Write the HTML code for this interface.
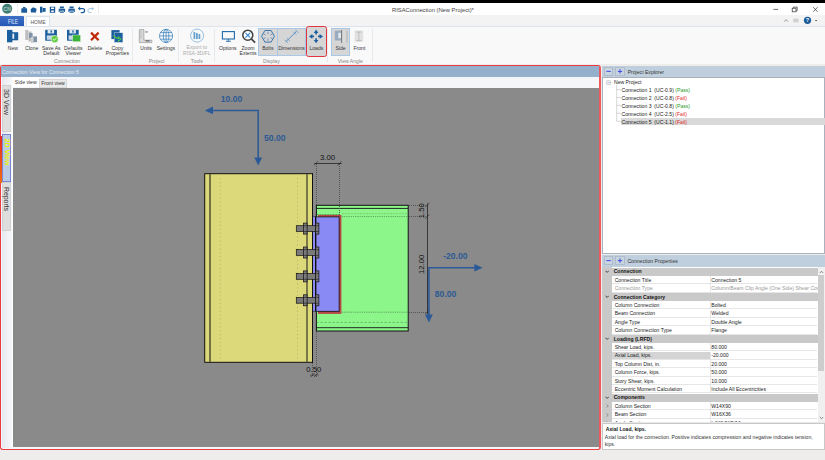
<!DOCTYPE html>
<html><head><meta charset="utf-8">
<style>
*{margin:0;padding:0;box-sizing:border-box}
html,body{width:825px;height:460px;overflow:hidden;background:#efedec;font-family:"Liberation Sans",sans-serif;color:#333}
.a{position:absolute}
.t{position:absolute;white-space:nowrap;font-size:5.1px;line-height:6px}
.c{transform:translateX(-50%)}
#ov{position:absolute;left:0;top:0;width:825px;height:460px}
</style></head><body>
<!-- top black band -->
<div class="a" style="left:0;top:0;width:825px;height:3px;background:#000"></div>
<!-- title bar -->
<div class="a" style="left:0;top:3px;width:825px;height:12px;background:#fff"></div>
<div class="t" style="left:392px;top:6.5px;font-size:5.8px;color:#444">RISAConnection (New Project)*</div>
<!-- tab row -->
<div class="a" style="left:0;top:15px;width:825px;height:11px;background:#f3f3f3"></div>
<div class="a" style="left:0;top:16px;width:24px;height:10.2px;background:linear-gradient(#3f70c8,#2558b4);border-top-right-radius:1px"></div>
<div class="t" style="left:12.5px;top:20.6px;transform:translate(-50%,-50%) scaleX(0.72);color:#e2ecfa;font-size:6.6px;line-height:7px">FILE</div>
<div class="a" style="left:25.5px;top:16px;width:24.5px;height:11px;background:#fff;border:1px solid #dde3ea;border-bottom:none"></div>
<div class="t" style="left:37.5px;top:21.5px;transform:translate(-50%,-50%) scaleX(0.84);color:#555;font-size:6px;line-height:7px">HOME</div>
<!-- ribbon -->
<div class="a" style="left:0;top:26px;width:825px;height:1px;background:#dce3ec"></div>
<div class="a" style="left:0;top:27px;width:825px;height:37px;background:#f9f9f9"></div>

<!-- ribbon separators -->
<div class="a" style="left:132.2px;top:29px;width:0.8px;height:33px;background:#e6eaee"></div>
<div class="a" style="left:178px;top:29px;width:0.8px;height:33px;background:#e6eaee"></div>
<div class="a" style="left:213.7px;top:29px;width:0.8px;height:33px;background:#e6eaee"></div>
<div class="a" style="left:326.9px;top:29px;width:0.8px;height:33px;background:#e6eaee"></div>
<div class="a" style="left:371.5px;top:29px;width:0.8px;height:33px;background:#e6eaee"></div>
<!-- toggle buttons bg -->
<div class="a" style="left:258.2px;top:28.2px;width:47.5px;height:28.3px;background:#d6d6d6;border:0.8px solid #a9c8e6"></div>
<div class="a" style="left:277.2px;top:28.2px;width:0.8px;height:28.3px;background:#a9c8e6"></div>
<div class="a" style="left:305.9px;top:26.2px;width:21px;height:31.1px;background:#d6d6d6;border:1.3px solid #e2343c;border-radius:2.5px"></div>
<div class="a" style="left:331px;top:28.2px;width:18.9px;height:28.3px;background:#d6d6d6;border:0.8px solid #a9c8e6"></div>
<!-- ribbon labels -->
<div class="t c" style="left:12.9px;top:45px;color:#333">New</div>
<div class="t c" style="left:31.7px;top:45px;color:#333">Clone</div>
<div class="t c" style="left:51.3px;top:45px;color:#333;line-height:5.5px;text-align:center;top:45.5px">Save As<br>Default</div>
<div class="t c" style="left:73.3px;top:45px;color:#333;line-height:5.5px;text-align:center;top:45.5px">Defaults<br>Viewer</div>
<div class="t c" style="left:95px;top:45px;color:#333">Delete</div>
<div class="t c" style="left:117.4px;top:45px;color:#333;line-height:5.5px;text-align:center;top:45.5px">Copy<br>Properties</div>
<div class="t c" style="left:146.1px;top:45px;color:#333">Units</div>
<div class="t c" style="left:165.9px;top:45px;color:#333">Settings</div>
<div class="t c" style="left:196.8px;top:45px;color:#aaa;line-height:5.5px;text-align:center">Export to<br>RISA-3D/FL</div>
<div class="t c" style="left:227.8px;top:45px;color:#333">Options</div>
<div class="t c" style="left:248px;top:45px;color:#333;line-height:5.5px;text-align:center;top:45.5px">Zoom<br>Extents</div>
<div class="t c" style="left:267.8px;top:45px;color:#333">Bolts</div>
<div class="t c" style="left:291.5px;top:45px;color:#333">Dimensions</div>
<div class="t c" style="left:316.4px;top:45px;color:#333">Loads</div>
<div class="t c" style="left:340.5px;top:45px;color:#333">Side</div>
<div class="t c" style="left:359.4px;top:45px;color:#333">Front</div>
<div class="t c" style="left:67px;top:58px;color:#868686">Connection</div>
<div class="t c" style="left:156.6px;top:58px;color:#868686">Project</div>
<div class="t c" style="left:196.8px;top:58px;color:#868686">Tools</div>
<div class="t c" style="left:271.4px;top:58px;color:#868686">Display</div>
<div class="t c" style="left:350.3px;top:58px;color:#868686">View Angle</div>
<!-- left panel -->
<div class="a" style="left:0;top:65px;width:601px;height:385.2px;border:1.6px solid #ec3c42;border-width:1.3px 2px 1.7px 1.5px;border-right-color:#f0585c;border-radius:3px;background:#f4f6fa"></div>
<div class="a" style="left:1.3px;top:66.3px;width:598px;height:10.7px;background:#94b0cc"></div>
<div class="t" style="left:2px;top:69px;color:#e4ecf4">Connection View for Connection 5</div>
<div class="a" style="left:12px;top:77.3px;width:27px;height:10px;background:#fff"></div>
<div class="t" style="left:14.8px;top:79px;color:#333">Side view</div>
<div class="a" style="left:39px;top:78.5px;width:27.7px;height:9px;background:#e8e8e8;border:0.5px solid #d8d8d8"></div>
<div class="t" style="left:41.2px;top:80px;color:#333">Front view</div>
<!-- left vertical tabs -->
<div class="a" style="left:1.5px;top:77.3px;width:10.3px;height:371px;background:linear-gradient(90deg,#e6e9ef,#f7f8fb)"></div><div class="a" style="left:11.8px;top:87.8px;width:1.2px;height:360px;background:#fff"></div>
<div class="a" style="left:1.5px;top:85.2px;width:9.2px;height:47px;background:#dedede;border:0.5px solid #d0d0d0"></div>
<div class="t" style="left:6.2px;top:101.9px;transform:translate(-50%,-50%) rotate(90deg);color:#333;font-size:7px;line-height:7px">3D View</div>
<div class="a" style="left:0;top:136px;width:1.6px;height:47px;background:linear-gradient(#e82a20,#f07010)"></div>
<div class="a" style="left:1.8px;top:133.6px;width:8.8px;height:48.4px;background:#b9cce4;border:0.7px solid #7a86d0"></div>
<div class="t" style="left:6.1px;top:152.2px;transform:translate(-50%,-50%) rotate(90deg);color:#f4f000;font-size:7.1px;font-weight:bold;line-height:7px">2D View</div>
<div class="a" style="left:1.5px;top:182.4px;width:9.2px;height:49px;background:#dedede;border:0.5px solid #d0d0d0"></div>
<div class="t" style="left:6px;top:199.2px;transform:translate(-50%,-50%) rotate(90deg);color:#333;font-size:6.9px;line-height:7px">Reports</div>
<!-- canvas -->
<div class="a" style="left:13px;top:87.8px;width:586px;height:359.6px;background:#8a8a8a"></div>

<!-- right panels -->
<div class="a" style="left:602px;top:66px;width:223px;height:11px;background:#c0cfdd"></div>
<div class="a" style="left:603.7px;top:67.1px;width:9.8px;height:8.6px;background:#c8d4e0;border:0.5px solid #b0bccc"></div>
<div class="a" style="left:615.1px;top:67.1px;width:9.8px;height:8.6px;background:#c8d4e0;border:0.5px solid #b0bccc"></div>
<div class="t" style="left:627.7px;top:68.5px;color:#333">Project Explorer</div>
<div class="a" style="left:602.3px;top:77px;width:222.7px;height:176.5px;background:#fff;border:0.7px solid #a9b1bd"></div>

<!-- tree -->
<div class="a" style="left:620.6px;top:117.7px;width:204px;height:7.4px;background:#d9d9d9"></div>
<svg class="a" style="left:0;top:0" width="825" height="460" viewBox="0 0 825 460">
<rect x="606.6" y="80.7" width="3.8" height="3.8" rx="0.6" fill="#fff" stroke="#9a9a9a" stroke-width="0.5"/>
<line x1="607.5" y1="82.6" x2="609.5" y2="82.6" stroke="#5060c0" stroke-width="0.5"/>
<line x1="610.4" y1="82.6" x2="613" y2="82.6" stroke="#999" stroke-width="0.4" stroke-dasharray="0.6,0.6"/>
<line x1="616.7" y1="85" x2="616.7" y2="121.3" stroke="#999" stroke-width="0.4"/>
<g stroke="#999" stroke-width="0.4">
<line x1="616.7" y1="89.6" x2="621" y2="89.6"/><line x1="616.7" y1="97.5" x2="621" y2="97.5"/>
<line x1="616.7" y1="105.4" x2="621" y2="105.4"/><line x1="616.7" y1="113.3" x2="621" y2="113.3"/>
<line x1="616.7" y1="121.3" x2="621" y2="121.3"/>
</g></svg>
<div class="t" style="left:614px;top:78.7px;color:#222">New Project</div>
<div class="t" style="left:621.5px;top:86.6px;color:#222">Connection 1&nbsp; (UC-0.9) <span style="color:#2a9a2a">(Pass)</span></div>
<div class="t" style="left:621.5px;top:94.5px;color:#222">Connection 2&nbsp; (UC-0.8) <span style="color:#e02828">(Fail)</span></div>
<div class="t" style="left:621.5px;top:102.5px;color:#222">Connection 3&nbsp; (UC-0.8) <span style="color:#2a9a2a">(Pass)</span></div>
<div class="t" style="left:621.5px;top:110.9px;color:#222">Connection 4&nbsp; (UC-2.5) <span style="color:#e02828">(Fail)</span></div>
<div class="t" style="left:621.5px;top:118.5px;color:#222">Connection 5&nbsp; (UC-1.1) <span style="color:#e02828">(Fail)</span></div>
<div class="a" style="left:602px;top:255px;width:223px;height:11.5px;background:#c0cfdd"></div>
<div class="a" style="left:603.7px;top:256.3px;width:9.8px;height:8.6px;background:#c8d4e0;border:0.5px solid #b0bccc"></div>
<div class="a" style="left:615.1px;top:256.3px;width:9.8px;height:8.6px;background:#c8d4e0;border:0.5px solid #b0bccc"></div>
<div class="t" style="left:627.4px;top:258px;color:#333">Connection Properties</div>

<div id="grid" class="a" style="left:602px;top:267px;width:223px;height:154.6px;background:#fff;overflow:hidden">
<div class="a" style="left:0;top:0;width:10px;height:160px;background:#c9c9c9"></div>
<div class="a" style="left:0;top:0.50px;width:215.5px;height:8.4px;background:#c9c9c9"></div>
<svg class="a" style="left:3px;top:2.90px" width="4.4" height="3.4" viewBox="0 0 4.4 3.4"><path d="M0.5,0.7 L2.2,2.4 L3.9,0.7" fill="none" stroke="#333" stroke-width="0.9"/></svg>
<div class="t" style="left:11.7px;top:1.40px;font-weight:bold;color:#111">Connection</div>
<div class="a" style="left:10px;top:8.90px;width:97.5px;height:8.4px;background:#fff;border-bottom:0.5px solid #e6e6e6"></div>
<div class="a" style="left:107.8px;top:8.90px;width:107.7px;height:8.4px;background:#fff;border-bottom:0.5px solid #e6e6e6;border-left:0.5px solid #e6e6e6"></div>
<div class="t" style="left:12.7px;top:9.80px;color:#222">Connection Title</div>
<div class="t" style="left:109.3px;top:9.80px;color:#222">Connection 5</div>
<div class="a" style="left:10px;top:17.30px;width:97.5px;height:8.4px;background:#fff;border-bottom:0.5px solid #e6e6e6"></div>
<div class="a" style="left:107.8px;top:17.30px;width:107.7px;height:8.4px;background:#fff;border-bottom:0.5px solid #e6e6e6;border-left:0.5px solid #e6e6e6"></div>
<div class="t" style="left:12.7px;top:18.20px;color:#999">Connection Type</div>
<div class="t" style="left:109.3px;top:18.20px;color:#999">Column/Beam Clip Angle (One Side) Shear Connection</div>
<div class="a" style="left:0;top:25.70px;width:215.5px;height:8.4px;background:#c9c9c9"></div>
<svg class="a" style="left:3px;top:28.10px" width="4.4" height="3.4" viewBox="0 0 4.4 3.4"><path d="M0.5,0.7 L2.2,2.4 L3.9,0.7" fill="none" stroke="#333" stroke-width="0.9"/></svg>
<div class="t" style="left:11.7px;top:26.60px;font-weight:bold;color:#111">Connection Category</div>
<div class="a" style="left:10px;top:34.10px;width:97.5px;height:8.4px;background:#fff;border-bottom:0.5px solid #e6e6e6"></div>
<div class="a" style="left:107.8px;top:34.10px;width:107.7px;height:8.4px;background:#fff;border-bottom:0.5px solid #e6e6e6;border-left:0.5px solid #e6e6e6"></div>
<div class="t" style="left:12.7px;top:35.00px;color:#222">Column Connection</div>
<div class="t" style="left:109.3px;top:35.00px;color:#222">Bolted</div>
<div class="a" style="left:10px;top:42.50px;width:97.5px;height:8.4px;background:#fff;border-bottom:0.5px solid #e6e6e6"></div>
<div class="a" style="left:107.8px;top:42.50px;width:107.7px;height:8.4px;background:#fff;border-bottom:0.5px solid #e6e6e6;border-left:0.5px solid #e6e6e6"></div>
<div class="t" style="left:12.7px;top:43.40px;color:#222">Beam Connection</div>
<div class="t" style="left:109.3px;top:43.40px;color:#222">Welded</div>
<div class="a" style="left:10px;top:50.90px;width:97.5px;height:8.4px;background:#fff;border-bottom:0.5px solid #e6e6e6"></div>
<div class="a" style="left:107.8px;top:50.90px;width:107.7px;height:8.4px;background:#fff;border-bottom:0.5px solid #e6e6e6;border-left:0.5px solid #e6e6e6"></div>
<div class="t" style="left:12.7px;top:51.80px;color:#222">Angle Type</div>
<div class="t" style="left:109.3px;top:51.80px;color:#222">Double Angle</div>
<div class="a" style="left:10px;top:59.30px;width:97.5px;height:8.4px;background:#fff;border-bottom:0.5px solid #e6e6e6"></div>
<div class="a" style="left:107.8px;top:59.30px;width:107.7px;height:8.4px;background:#fff;border-bottom:0.5px solid #e6e6e6;border-left:0.5px solid #e6e6e6"></div>
<div class="t" style="left:12.7px;top:60.20px;color:#222">Column Connection Type</div>
<div class="t" style="left:109.3px;top:60.20px;color:#222">Flange</div>
<div class="a" style="left:0;top:67.70px;width:215.5px;height:8.4px;background:#c9c9c9"></div>
<svg class="a" style="left:3px;top:70.10px" width="4.4" height="3.4" viewBox="0 0 4.4 3.4"><path d="M0.5,0.7 L2.2,2.4 L3.9,0.7" fill="none" stroke="#333" stroke-width="0.9"/></svg>
<div class="t" style="left:11.7px;top:68.60px;font-weight:bold;color:#111">Loading (LRFD)</div>
<div class="a" style="left:10px;top:76.10px;width:97.5px;height:8.4px;background:#fff;border-bottom:0.5px solid #e6e6e6"></div>
<div class="a" style="left:107.8px;top:76.10px;width:107.7px;height:8.4px;background:#fff;border-bottom:0.5px solid #e6e6e6;border-left:0.5px solid #e6e6e6"></div>
<div class="t" style="left:12.7px;top:77.00px;color:#222">Shear Load, kips.</div>
<div class="t" style="left:109.3px;top:77.00px;color:#222">80.000</div>
<div class="a" style="left:10px;top:84.50px;width:97.5px;height:8.4px;background:#d4d4d4;border-bottom:0.5px solid #e6e6e6"></div>
<div class="a" style="left:107.8px;top:84.50px;width:107.7px;height:8.4px;background:#fff;border-bottom:0.5px solid #e6e6e6;border-left:0.5px solid #e6e6e6"></div>
<div class="t" style="left:12.7px;top:85.40px;color:#222">Axial Load, kips.</div>
<div class="t" style="left:109.3px;top:85.40px;color:#222">-20.000</div>
<div class="a" style="left:10px;top:92.90px;width:97.5px;height:8.4px;background:#fff;border-bottom:0.5px solid #e6e6e6"></div>
<div class="a" style="left:107.8px;top:92.90px;width:107.7px;height:8.4px;background:#fff;border-bottom:0.5px solid #e6e6e6;border-left:0.5px solid #e6e6e6"></div>
<div class="t" style="left:12.7px;top:93.80px;color:#222">Top Column Dist, in.</div>
<div class="t" style="left:109.3px;top:93.80px;color:#222">20.000</div>
<div class="a" style="left:10px;top:101.30px;width:97.5px;height:8.4px;background:#fff;border-bottom:0.5px solid #e6e6e6"></div>
<div class="a" style="left:107.8px;top:101.30px;width:107.7px;height:8.4px;background:#fff;border-bottom:0.5px solid #e6e6e6;border-left:0.5px solid #e6e6e6"></div>
<div class="t" style="left:12.7px;top:102.20px;color:#222">Column Force, kips.</div>
<div class="t" style="left:109.3px;top:102.20px;color:#222">50.000</div>
<div class="a" style="left:10px;top:109.70px;width:97.5px;height:8.4px;background:#fff;border-bottom:0.5px solid #e6e6e6"></div>
<div class="a" style="left:107.8px;top:109.70px;width:107.7px;height:8.4px;background:#fff;border-bottom:0.5px solid #e6e6e6;border-left:0.5px solid #e6e6e6"></div>
<div class="t" style="left:12.7px;top:110.60px;color:#222">Story Shear, kips.</div>
<div class="t" style="left:109.3px;top:110.60px;color:#222">10.000</div>
<div class="a" style="left:10px;top:118.10px;width:97.5px;height:8.4px;background:#fff;border-bottom:0.5px solid #e6e6e6"></div>
<div class="a" style="left:107.8px;top:118.10px;width:107.7px;height:8.4px;background:#fff;border-bottom:0.5px solid #e6e6e6;border-left:0.5px solid #e6e6e6"></div>
<div class="t" style="left:12.7px;top:119.00px;color:#222">Eccentric Moment Calculation</div>
<div class="t" style="left:109.3px;top:119.00px;color:#222">Include All Eccentricities</div>
<div class="a" style="left:0;top:126.50px;width:215.5px;height:8.4px;background:#c9c9c9"></div>
<svg class="a" style="left:3px;top:128.90px" width="4.4" height="3.4" viewBox="0 0 4.4 3.4"><path d="M0.5,0.7 L2.2,2.4 L3.9,0.7" fill="none" stroke="#333" stroke-width="0.9"/></svg>
<div class="t" style="left:11.7px;top:127.40px;font-weight:bold;color:#111">Components</div>
<div class="a" style="left:10px;top:134.90px;width:97.5px;height:8.4px;background:#fff;border-bottom:0.5px solid #e6e6e6"></div>
<div class="a" style="left:107.8px;top:134.90px;width:107.7px;height:8.4px;background:#fff;border-bottom:0.5px solid #e6e6e6;border-left:0.5px solid #e6e6e6"></div>
<div class="t" style="left:12.7px;top:135.80px;color:#222">Column Section</div>
<div class="t" style="left:109.3px;top:135.80px;color:#222">W14X90</div>
<svg class="a" style="left:4px;top:137.30px" width="3" height="4" viewBox="0 0 3 4"><path d="M0.6,0.4 L2.2,2 L0.6,3.6" fill="none" stroke="#666" stroke-width="0.6"/></svg>
<div class="a" style="left:10px;top:143.30px;width:97.5px;height:8.4px;background:#fff;border-bottom:0.5px solid #e6e6e6"></div>
<div class="a" style="left:107.8px;top:143.30px;width:107.7px;height:8.4px;background:#fff;border-bottom:0.5px solid #e6e6e6;border-left:0.5px solid #e6e6e6"></div>
<div class="t" style="left:12.7px;top:144.20px;color:#222">Beam Section</div>
<div class="t" style="left:109.3px;top:144.20px;color:#222">W16X36</div>
<svg class="a" style="left:4px;top:145.70px" width="3" height="4" viewBox="0 0 3 4"><path d="M0.6,0.4 L2.2,2 L0.6,3.6" fill="none" stroke="#666" stroke-width="0.6"/></svg>
<div class="a" style="left:10px;top:151.70px;width:97.5px;height:8.4px;background:#fff;border-bottom:0.5px solid #e6e6e6"></div>
<div class="a" style="left:107.8px;top:151.70px;width:107.7px;height:8.4px;background:#fff;border-bottom:0.5px solid #e6e6e6;border-left:0.5px solid #e6e6e6"></div>
<div class="t" style="left:12.7px;top:152.60px;color:#222">Angle Section</div>
<div class="t" style="left:109.3px;top:152.60px;color:#222">L4X3.5X5/16</div>
<svg class="a" style="left:4px;top:154.10px" width="3" height="4" viewBox="0 0 3 4"><path d="M0.6,0.4 L2.2,2 L0.6,3.6" fill="none" stroke="#666" stroke-width="0.6"/></svg>
<div class="a" style="left:215.5px;top:0;width:7.5px;height:155px;background:#f0f0f0"></div>
<div class="a" style="left:216.3px;top:8.3px;width:6px;height:96px;background:#cdcdcd"></div>
<svg class="a" style="left:216.5px;top:2.5px" width="5" height="4" viewBox="0 0 5 4"><path d="M0.8,3 L2.5,1.3 L4.2,3" fill="none" stroke="#555" stroke-width="0.7"/></svg>
<svg class="a" style="left:216.5px;top:149px" width="5" height="4" viewBox="0 0 5 4"><path d="M0.8,1 L2.5,2.7 L4.2,1" fill="none" stroke="#555" stroke-width="0.7"/></svg>
</div>

<div class="a" style="left:602px;top:421.6px;width:223px;height:2px;background:#e8e8e8"></div>
<div class="a" style="left:602.2px;top:423.2px;width:222.8px;height:26.6px;background:#fff;border:0.8px solid #c8c8c8"></div>
<div class="t" style="left:605.8px;top:426px;font-weight:bold;color:#111">Axial Load, kips.</div>
<div class="t" style="left:604.8px;top:433.7px;color:#333">Axial load for the connection. Positive indicates compression and negative indicates tension,</div>
<div class="t" style="left:604.8px;top:440.9px;color:#333">kips.</div>

<svg id="ov" viewBox="0 0 825 460">
<!-- title logo -->
<circle cx="7.2" cy="8.8" r="5" fill="#3f7d72"/>
<text x="7.2" y="10.8" font-family="Liberation Sans" font-size="5" fill="#cfe3df" text-anchor="middle">CN</text>
<line x1="17.6" y1="4" x2="17.6" y2="14" stroke="#e4e4e4" stroke-width="0.7"/>
<line x1="98.5" y1="4" x2="98.5" y2="14" stroke="#e4e4e4" stroke-width="0.7"/>
<!-- quick access -->
<g fill="#1c5b9a">
<rect x="21.3" y="8.2" width="5.8" height="4.6" rx="0.6"/><rect x="23" y="7" width="2.4" height="1.6"/>
<path d="M30.6,9.3 L33,7.3 L36.6,8.8 L36,12.6 L31,12.6 Z"/>
<rect x="40" y="6.7" width="2.4" height="6"/><rect x="42.6" y="8" width="3" height="3.8"/>
<path d="M49.8,6.7 h5.4 v6 h-5.4 Z M51,7.4 v1.6 h3 v-1.6 Z M51.2,10.5 v1.6 h2.6 v-1.6 Z" fill-rule="evenodd"/>
<path d="M58.7,8.8 h6.4 v3.2 h-1 v-1.2 h-4.4 v1.2 h-1 Z M59.900000000000006,6.6 h4 v1.6 h-4 Z M59.900000000000006,11.4 h4 v1.4 h-4 Z"/>
<path d="M68.4,8.8 h6.4 v3.2 h-1 v-1.2 h-4.4 v1.2 h-1 Z M69.60000000000001,6.6 h4 v1.6 h-4 Z M69.60000000000001,11.4 h4 v1.4 h-4 Z"/>
</g>
<path d="M79.4,8.6 h3.2 a2,2 0 0 1 0,4 h-1.8" fill="none" stroke="#1c5b9a" stroke-width="1.2"/>
<path d="M77.8,8.6 l2.3,-2 v4 z" fill="#1c5b9a"/>
<path d="M93.2,8.6 h-3.4 a2,2 0 0 0 0,4 h1.6" fill="none" stroke="#9cc0e0" stroke-width="0.9"/>
<path d="M94,8.6 l-2,-1.7 v3.4 z" fill="#9cc0e0"/>
<!-- window controls -->
<line x1="773.4" y1="9.4" x2="778.1" y2="9.4" stroke="#333" stroke-width="0.7"/>
<rect x="792.2" y="8.2" width="3.8" height="3.6" fill="none" stroke="#333" stroke-width="0.7"/>
<path d="M793.4,8.2 v-1.1 h3.8 v3.6 h-1.1" fill="none" stroke="#333" stroke-width="0.7"/>
<path d="M813.2,7.2 l4.4,4.6 M817.6,7.2 l-4.4,4.6" stroke="#333" stroke-width="0.7"/>
<path d="M784.2,21.6 l1.9,-1.9 l1.9,1.9" fill="none" stroke="#666" stroke-width="0.7"/>
<rect x="793.2" y="18.6" width="5.4" height="3.8" fill="#d0d0d0"/>
<circle cx="807.5" cy="20.3" r="3.6" fill="#1c5b9a"/>
<text x="807.5" y="22.3" font-family="Liberation Sans" font-size="5.4" font-weight="bold" fill="#fff" text-anchor="middle">?</text>
<path d="M815,20 h2.2 l-1.1,1.2 z" fill="#333"/>
<!-- ribbon: New -->
<g fill="#1c5f9e">
<rect x="7" y="29.9" width="5.4" height="12.4"/>
<rect x="12" y="32.2" width="6.2" height="8.1"/>
</g>
<rect x="12.4" y="33.6" width="1.8" height="5.2" fill="#e8eef5"/>
<!-- Clone -->
<g fill="#bdbdbd"><rect x="25.3" y="30" width="3" height="10"/><rect x="28.5" y="31.5" width="3" height="10"/></g>
<g fill="#7e94a8"><rect x="29" y="33" width="3.6" height="5"/><rect x="33" y="36.4" width="4" height="5.8"/></g>
<rect x="31" y="37" width="2.5" height="6" fill="#d0d0d0"/>
<!-- Save As Default -->
<rect x="45.2" y="29.8" width="11.7" height="10.9" fill="#1c5f9e"/>
<rect x="47.6" y="29.8" width="6.5" height="3.6" fill="#e0e8f0"/><rect x="50.5" y="30.4" width="1.4" height="2.2" fill="#1c5f9e"/>
<rect x="46.8" y="35.4" width="8.6" height="4.4" fill="#c8d6e6"/>
<circle cx="54.7" cy="39.1" r="3.6" fill="#5ecb3e" stroke="#fff" stroke-width="0.5"/>
<path d="M52.9,39.1 l1.3,1.3 l2.3,-2.4" fill="none" stroke="#fff" stroke-width="0.9"/>
<!-- Defaults Viewer -->
<rect x="67" y="29.8" width="11.7" height="10.9" fill="#1c5f9e"/>
<rect x="69.4" y="29.8" width="6.5" height="3.6" fill="#e0e8f0"/><rect x="72.3" y="30.4" width="1.4" height="2.2" fill="#1c5f9e"/>
<rect x="68.6" y="35.4" width="8.6" height="4.4" fill="#c8d6e6"/>
<rect x="72.5" y="35" width="8.1" height="6.8" fill="#3cb43c" stroke="#fff" stroke-width="0.4"/>
<!-- Delete -->
<path d="M91,32.6 L98.6,40.2 M98.6,32.6 L91,40.2" stroke="#c0280a" stroke-width="2.2"/>
<!-- Copy Properties -->
<rect x="111.4" y="30.1" width="8.2" height="9" fill="#1c5f9e"/>
<rect x="114.2" y="32.8" width="8.7" height="9.6" fill="#1c5f9e" stroke="#e8eef5" stroke-width="0.4"/>
<path d="M113.5,35.2 q1.5,3 5,3.2 v-1.3 l2.4,2 l-2.4,2 v-1.3" fill="none" stroke="#4cc04c" stroke-width="1.1"/>
<!-- Units -->
<path d="M139.3,29.6 h4.6 v10.6 h8 v2.4 h-12.6 z" fill="#dadada" stroke="#8a8a8a" stroke-width="0.6"/>
<path d="M140.2,32 h1.8 M140.2,34 h1.2 M140.2,36 h1.8 M140.2,38 h1.2" stroke="#888" stroke-width="0.45"/>
<text x="145.2" y="33.4" font-family="Liberation Sans" font-size="3.2" fill="#333">in</text>
<text x="145.4" y="42" font-family="Liberation Sans" font-size="2.6" fill="#333">mm</text>
<!-- Settings globe -->
<g fill="none" stroke="#2e7ab8" stroke-width="0.7">
<circle cx="166.1" cy="35.9" r="6.6"/>
<ellipse cx="166.1" cy="35.9" rx="2.8" ry="6.6"/>
<line x1="166.1" y1="29.3" x2="166.1" y2="42.5"/>
<line x1="159.5" y1="35.9" x2="172.7" y2="35.9"/>
<path d="M160.4,32.6 h11.4 M160.4,39.2 h11.4"/>
</g>
<!-- Export -->
<circle cx="197.1" cy="35.6" r="6.5" fill="none" stroke="#7ab0da" stroke-width="0.8"/>
<g fill="#6aa2d0"><rect x="193.5" y="32" width="1.8" height="7"/><rect x="196" y="33" width="1.8" height="6"/><rect x="198.5" y="34" width="1.8" height="5"/></g>
<!-- Options monitor -->
<rect x="222.4" y="31.6" width="12" height="7.4" fill="none" stroke="#1f6aa8" stroke-width="1.1"/>
<path d="M228.4,39 v1.6 M226,41.3 h4.8" stroke="#1f6aa8" stroke-width="1.1"/>
<!-- Zoom extents -->
<circle cx="247.8" cy="35.2" r="5" fill="#fff" stroke="#454545" stroke-width="1.6"/>
<path d="M251.3,38.8 l3.8,3.8" stroke="#454545" stroke-width="1.8"/>
<path d="M245.4,32.8 l4.8,4.8 M250.2,32.8 l-4.8,4.8" stroke="#2e86d8" stroke-width="1.1"/>
<!-- Bolts icon -->
<path d="M264.9,30.5 h6.2 l3.3,5.8 l-3.3,5.8 h-6.2 l-3.3,-5.8 z" fill="none" stroke="#2f6aa6" stroke-width="0.9"/>
<g stroke="#2f6aa6" stroke-width="0.6"><path d="M268,31.8 v2.4 M268,38.4 v2.4 M263.6,33.8 l2,1.2 M270.4,37.6 l2,1.2 M263.6,38.8 l2,-1.2 M270.4,35 l2,-1.2"/></g>
<!-- Dimensions icon -->
<path d="M285.8,41.8 L296.4,31.4" stroke="#4a88c0" stroke-width="0.9"/>
<path d="M284.6,39.8 l3.2,3.2 M286.8,38 l3.2,3.2 M293.2,31.6 l3.2,3.2 M295.4,29.8 l3.2,3.2" stroke="#4a88c0" stroke-width="0.6"/>
<!-- Loads icon -->
<g fill="#1c5f9e">
<path d="M316.1,29.6 l2.3,3.3 h-1.5 v1.6 h-1.6 v-1.6 h-1.5 z"/>
<path d="M316.1,43.2 l2.3,-3.3 h-1.5 v-1.6 h-1.6 v1.6 h-1.5 z"/>
<path d="M309,36.4 l3.3,-2.3 v1.5 h1.7 v1.6 h-1.7 v1.5 z"/>
<path d="M323,36.4 l-3.3,-2.3 v1.5 h-1.7 v1.6 h1.7 v1.5 z"/>
</g>
<!-- Side icon -->
<rect x="334.8" y="30.7" width="12.6" height="12" fill="#d8d8d8"/>
<rect x="334.8" y="30.7" width="6.6" height="9.8" fill="#9aaabf"/>
<rect x="338.3" y="32.8" width="2.6" height="5.4" fill="#e6ebf2"/>
<rect x="341.2" y="30" width="0.9" height="13" fill="#6a6a6a"/>
<rect x="346.6" y="30.7" width="0.7" height="12" fill="#a0a0a0"/>
<!-- Front icon -->
<rect x="354.6" y="30.5" width="8.6" height="11.2" fill="#e2e2e2"/>
<path d="M356.2,32 h5.4 M358.9,32 v8.6 M356.2,40.6 h5.4" stroke="#b0b0b0" stroke-width="0.7"/>
<!-- column -->
<rect x="204.7" y="173.7" width="107.8" height="188.6" fill="#dcd97a" stroke="#111" stroke-width="1"/>
<line x1="210" y1="174" x2="210" y2="362" stroke="#62603a" stroke-width="1.7"/>
<line x1="307" y1="174" x2="307" y2="362" stroke="#686640" stroke-width="1.7"/>
<line x1="220.3" y1="174" x2="220.3" y2="362" stroke="#b8b668" stroke-width="0.8" stroke-dasharray="1.5,2.4"/>
<line x1="297.5" y1="174" x2="297.5" y2="362" stroke="#b8b668" stroke-width="0.8" stroke-dasharray="1.5,2.4"/>
<!-- beam -->
<rect x="316.4" y="205.3" width="91.8" height="125.7" fill="#8df68a" stroke="#111" stroke-width="1"/>
<line x1="316.4" y1="208.4" x2="408.2" y2="208.4" stroke="#111" stroke-width="0.9"/>
<line x1="316.4" y1="327.7" x2="408.2" y2="327.7" stroke="#111" stroke-width="0.9"/>
<line x1="342" y1="213.7" x2="408" y2="213.7" stroke="#6aa868" stroke-width="0.5" stroke-dasharray="2,1"/>
<line x1="342" y1="216.6" x2="408" y2="216.6" stroke="#3a6a3a" stroke-width="0.6" stroke-dasharray="1.2,1"/>
<line x1="342" y1="312.2" x2="408" y2="312.2" stroke="#3a6a3a" stroke-width="0.6" stroke-dasharray="1.2,1"/>
<line x1="316.5" y1="322.4" x2="408" y2="322.4" stroke="#4a8a4a" stroke-width="0.5" stroke-dasharray="2.5,1.5"/>
<line x1="317" y1="214.5" x2="339" y2="214.5" stroke="#2a5a2a" stroke-width="0.6" stroke-dasharray="1,0.6"/>
<!-- angle red (behind) -->
<rect x="318" y="215" width="23.4" height="98.9" fill="#b84848"/>
<!-- angle blue -->
<rect x="313.1" y="216.4" width="2.4" height="95" fill="#8a8af5"/>
<rect x="316" y="216.9" width="23.1" height="94.4" fill="#8a8af5" stroke="#111" stroke-width="0.8"/>
<line x1="312.6" y1="216.4" x2="316" y2="216.4" stroke="#111" stroke-width="0.5"/>
<line x1="312.6" y1="311.3" x2="316" y2="311.3" stroke="#111" stroke-width="0.5"/>
<!-- column right edge redraw -->
<line x1="312.5" y1="173.2" x2="312.5" y2="362.8" stroke="#111" stroke-width="1"/>
<line x1="315.5" y1="216.4" x2="315.5" y2="311.4" stroke="#111" stroke-width="1"/>
<rect x="296.3" y="225.7" width="19.5" height="5.8" fill="#7a7a7a" stroke="#111" stroke-width="0.7"/>
<rect x="303.5" y="223.1" width="3.6" height="11" fill="#7a7a7a" stroke="#111" stroke-width="0.7"/>
<line x1="303.5" y1="225.7" x2="307.1" y2="225.7" stroke="#111" stroke-width="0.5"/>
<line x1="303.5" y1="231.5" x2="307.1" y2="231.5" stroke="#111" stroke-width="0.5"/>
<rect x="315.7" y="223.1" width="3.2" height="11" fill="#7a7a7a" stroke="#111" stroke-width="0.7"/>
<line x1="315.7" y1="225.7" x2="318.9" y2="225.7" stroke="#111" stroke-width="0.5"/>
<line x1="315.7" y1="231.5" x2="318.9" y2="231.5" stroke="#111" stroke-width="0.5"/>
<rect x="296.3" y="249.6" width="19.5" height="5.8" fill="#7a7a7a" stroke="#111" stroke-width="0.7"/>
<rect x="303.5" y="247.0" width="3.6" height="11" fill="#7a7a7a" stroke="#111" stroke-width="0.7"/>
<line x1="303.5" y1="249.6" x2="307.1" y2="249.6" stroke="#111" stroke-width="0.5"/>
<line x1="303.5" y1="255.4" x2="307.1" y2="255.4" stroke="#111" stroke-width="0.5"/>
<rect x="315.7" y="247.0" width="3.2" height="11" fill="#7a7a7a" stroke="#111" stroke-width="0.7"/>
<line x1="315.7" y1="249.6" x2="318.9" y2="249.6" stroke="#111" stroke-width="0.5"/>
<line x1="315.7" y1="255.4" x2="318.9" y2="255.4" stroke="#111" stroke-width="0.5"/>
<rect x="296.3" y="273.5" width="19.5" height="5.8" fill="#7a7a7a" stroke="#111" stroke-width="0.7"/>
<rect x="303.5" y="270.9" width="3.6" height="11" fill="#7a7a7a" stroke="#111" stroke-width="0.7"/>
<line x1="303.5" y1="273.5" x2="307.1" y2="273.5" stroke="#111" stroke-width="0.5"/>
<line x1="303.5" y1="279.3" x2="307.1" y2="279.3" stroke="#111" stroke-width="0.5"/>
<rect x="315.7" y="270.9" width="3.2" height="11" fill="#7a7a7a" stroke="#111" stroke-width="0.7"/>
<line x1="315.7" y1="273.5" x2="318.9" y2="273.5" stroke="#111" stroke-width="0.5"/>
<line x1="315.7" y1="279.3" x2="318.9" y2="279.3" stroke="#111" stroke-width="0.5"/>
<rect x="296.3" y="297.4" width="19.5" height="5.8" fill="#7a7a7a" stroke="#111" stroke-width="0.7"/>
<rect x="303.5" y="294.8" width="3.6" height="11" fill="#7a7a7a" stroke="#111" stroke-width="0.7"/>
<line x1="303.5" y1="297.4" x2="307.1" y2="297.4" stroke="#111" stroke-width="0.5"/>
<line x1="303.5" y1="303.2" x2="307.1" y2="303.2" stroke="#111" stroke-width="0.5"/>
<rect x="315.7" y="294.8" width="3.2" height="11" fill="#7a7a7a" stroke="#111" stroke-width="0.7"/>
<line x1="315.7" y1="297.4" x2="318.9" y2="297.4" stroke="#111" stroke-width="0.5"/>
<line x1="315.7" y1="303.2" x2="318.9" y2="303.2" stroke="#111" stroke-width="0.5"/>
<g stroke="#222" fill="none">
<line x1="314.3" y1="163.5" x2="341.7" y2="163.5" stroke-width="0.8"/>
<line x1="314" y1="165.5" x2="318" y2="161.2" stroke-width="0.6"/>
<line x1="337.6" y1="165.5" x2="341.6" y2="161.2" stroke-width="0.6"/>
<line x1="316.5" y1="164" x2="316.5" y2="205" stroke-width="0.9" stroke-dasharray="1,1" stroke="#4e4e4e"/>
<line x1="339.5" y1="164" x2="339.5" y2="215" stroke-width="0.9" stroke-dasharray="1,1" stroke="#4e4e4e"/>
<line x1="427.5" y1="203.5" x2="427.5" y2="314" stroke-width="0.8"/>
<line x1="425.4" y1="207.2" x2="429.4" y2="202.8" stroke-width="0.6"/>
<line x1="425.4" y1="218.8" x2="429.4" y2="214.4" stroke-width="0.6"/>
<line x1="425.4" y1="314.2" x2="429.4" y2="309.8" stroke-width="0.6"/>
<line x1="409" y1="205.5" x2="427" y2="205.5" stroke-width="0.9" stroke-dasharray="1,1" stroke="#4e4e4e"/>
<line x1="409" y1="216.5" x2="427" y2="216.5" stroke-width="0.9" stroke-dasharray="1,1" stroke="#4e4e4e"/>
<line x1="409" y1="312.5" x2="427" y2="312.5" stroke-width="0.9" stroke-dasharray="1,1" stroke="#4e4e4e"/>
<line x1="312.5" y1="363" x2="312.5" y2="377" stroke-width="0.9" stroke-dasharray="1,1" stroke="#4e4e4e"/>
<line x1="316.5" y1="332" x2="316.5" y2="377" stroke-width="0.9" stroke-dasharray="1,1" stroke="#4e4e4e"/>
<line x1="310.5" y1="377.2" x2="314.6" y2="373" stroke-width="0.6"/>
<line x1="314" y1="377.2" x2="318" y2="373" stroke-width="0.6"/>
<line x1="310" y1="375.1" x2="318.6" y2="375.1" stroke-width="0.5"/>
</g>
<g font-family="Liberation Sans" font-size="7.7" fill="#111" text-anchor="middle">
<text x="327.5" y="160.3">3.00</text>
<text x="313.8" y="371.8">0.50</text>
<text transform="translate(423.8,210.8) rotate(-90)" x="0" y="0">1.50</text>
<text transform="translate(424.2,264.3) rotate(-90)" x="0" y="0">12.00</text>
</g>
<g stroke="#2a5a98" stroke-width="1.5" fill="none">
<polyline points="210,110.4 258.2,110.4 258.2,159"/>
<polyline points="477,267.8 428.9,267.8 428.9,316"/>
</g>
<path d="M204.8,110.4 L213.0,106.60000000000001 L213.0,114.2 Z" fill="#2a5a98"/><path d="M258.2,165.6 L254.29999999999998,157.4 L262.09999999999997,157.4 Z" fill="#2a5a98"/><path d="M482.6,267.8 L474.40000000000003,264.0 L474.40000000000003,271.6 Z" fill="#2a5a98"/><path d="M428.9,322.6 L425,314.4 L432.8,314.4 Z" fill="#2a5a98"/>
<g font-family="Liberation Sans" font-size="8.6" font-weight="bold" fill="#2d5a94" text-anchor="middle">
<text x="231.6" y="101.8">10.00</text>
<text x="274.8" y="140.5">50.00</text>
<text x="455.4" y="258.8">-20.00</text>
<text x="445.6" y="297.1">80.00</text>
</g>
<g stroke="#3240dc" stroke-width="0.9">
<path d="M606.4,71.4 h4.4 M617.8,71.4 h4.4 M620,69.2 v4.4"/>
<path d="M606.4,260.6 h4.4 M617.8,260.6 h4.4 M620,258.4 v4.4"/>
</g></svg>
</body></html>
